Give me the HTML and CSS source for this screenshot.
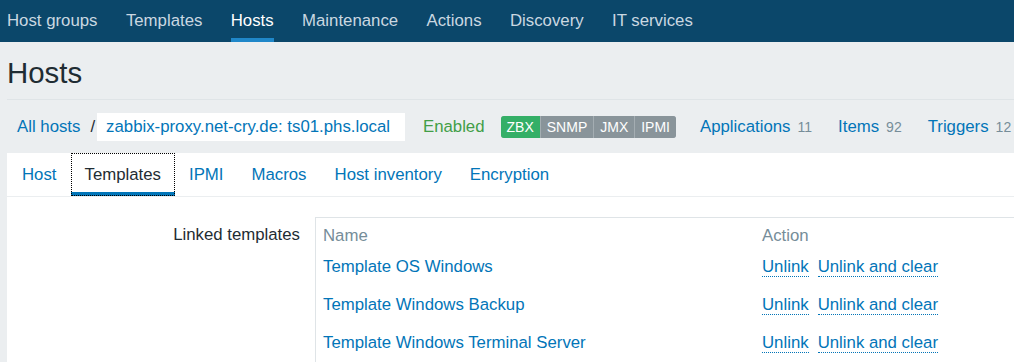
FILE: index.html
```html
<!DOCTYPE html>
<html lang="en">
<head>
    <meta charset="UTF-8">
    <meta name="viewport" content="width=device-width, initial-scale=1.0">
    <title>Hosts</title>
    <link rel="stylesheet" href="styles.css">
</head>
<body>
    <!-- Top menu -->
    <nav class="top-nav">
        <a href="#">Host groups</a>
        <a href="#">Templates</a>
        <a href="#" class="selected">Hosts</a>
        <a href="#">Maintenance</a>
        <a href="#">Actions</a>
        <a href="#">Discovery</a>
        <a href="#">IT services</a>
    </nav>

    <div class="page">
        <div class="page-header">
            <h1>Hosts</h1>
        </div>

        <!-- Host breadcrumbs and status -->
        <div class="host-bar">
            <a href="#" class="crumb">All hosts</a>
            <span class="crumb-sep">/</span>
            <span class="crumb-current">zabbix-proxy.net-cry.de: ts01.phs.local</span>
            <span class="status-enabled">Enabled</span>
            <span class="status-group">
                <span class="status status-green">ZBX</span>
                <span class="status">SNMP</span>
                <span class="status">JMX</span>
                <span class="status">IPMI</span>
            </span>
            <a href="#" class="host-link">Applications<span class="count">11</span></a>
            <a href="#" class="host-link">Items<span class="count">92</span></a>
            <a href="#" class="host-link">Triggers<span class="count">12</span></a>
        </div>

        <div class="tab-panel">
            <ul class="tabs">
                <li><a href="#">Host</a></li>
                <li class="active"><a href="#">Templates</a></li>
                <li><a href="#">IPMI</a></li>
                <li><a href="#">Macros</a></li>
                <li><a href="#">Host inventory</a></li>
                <li><a href="#">Encryption</a></li>
            </ul>

            <div class="form-row">
                <div class="form-label">Linked templates</div>
                <div class="form-field">
                    <div class="tpl-table">
                        <div class="tpl-row tpl-head">
                            <span>Name</span>
                            <span>Action</span>
                        </div>
                        <div class="tpl-row">
                            <a href="#">Template OS Windows</a>
                            <span><a href="#" class="action">Unlink</a><a href="#" class="action">Unlink and clear</a></span>
                        </div>
                        <div class="tpl-row">
                            <a href="#">Template Windows Backup</a>
                            <span><a href="#" class="action">Unlink</a><a href="#" class="action">Unlink and clear</a></span>
                        </div>
                        <div class="tpl-row">
                            <a href="#">Template Windows Terminal Server</a>
                            <span><a href="#" class="action">Unlink</a><a href="#" class="action">Unlink and clear</a></span>
                        </div>
                    </div>
                </div>
            </div>
        </div>
    </div>
</body>
</html>
```

FILE: styles.css
```css
html {
    overflow: hidden;
}

body {
    margin: 0;
    min-width: 1060px;
    font-family: "Liberation Sans", Arial, sans-serif;
    font-size: 16.8px;
    color: #1f2c33;
    background-color: #ebeef0;
}

a {
    color: #0275b8;
    text-decoration: none;
}

/* Top menu */
.top-nav {
    display: flex;
    gap: 28.4px;
    height: 42px;
    padding-left: 7px;
    background-color: #0b476a;
    box-sizing: border-box;
}

.top-nav a {
    padding: 10px 0 7px;
    line-height: 21px;
    color: #cad8e1;
    border-bottom: 4px solid transparent;
}

.top-nav a.selected {
    color: #ffffff;
    border-bottom-color: #1f87c9;
}

.page {
    padding-left: 7px;
}

.page-header {
    padding: 14px 0 9px;
    border-bottom: 1px solid #dfe4e7;
}

.page-header h1 {
    margin: 0;
    font-size: 29.4px;
    line-height: 34px;
    font-weight: normal;
}

/* Host bar */
.host-bar {
    display: flex;
    align-items: center;
    height: 28px;
    margin-top: 13px;
    padding-left: 10px;
    white-space: nowrap;
}

.crumb-sep {
    margin: 0 2px 0 10px;
}

.crumb-current {
    padding: 0 15px 0 9px;
    line-height: 28px;
    color: #0275b8;
    background-color: #ffffff;
}

.status-enabled {
    margin-left: 18px;
    color: #429e47;
}

.status-group {
    display: flex;
    gap: 1px;
    margin-left: 16px;
    background-color: #a4adb2;
    border-radius: 3px;
    overflow: hidden;
}

.status {
    padding: 0 6px;
    height: 22px;
    line-height: 22px;
    font-size: 14px;
    color: #ffffff;
    background-color: #89949a;
}

.status-green {
    background-color: #34af67;
}

.host-link {
    margin-left: 24px;
}

.host-link + .host-link {
    margin-left: 26px;
}

.count {
    margin-left: 7px;
    font-size: 14px;
    color: #768d99;
}

/* Tabs */
.tab-panel {
    margin-top: 12px;
    background-color: #ffffff;
    padding-bottom: 20px;
}

.tabs {
    display: flex;
    margin: 0;
    padding: 0;
    list-style: none;
    border-bottom: 1px solid #ebeef0;
}

.tabs li {
    padding: 12px 14px 7px;
    line-height: 20px;
    border-bottom: 4px solid transparent;
}

.tabs li:first-child {
    padding-left: 15px;
}

.tabs li.active {
    border-bottom-color: #0275b8;
    outline: 1px dotted #000000;
    outline-offset: -1px;
}

.tabs li.active a {
    color: #1f2c33;
}

/* Form */
.form-row {
    display: grid;
    grid-template-columns: 293px 1fr;
    gap: 15px;
    margin-top: 20px;
}

.form-label {
    padding-top: 8px;
    line-height: 20px;
    text-align: right;
}

.tpl-table {
    padding: 0 7px;
    border-top: 1px solid #dfe4e7;
    border-left: 1px solid #dfe4e7;
}

.tpl-row {
    display: grid;
    grid-template-columns: 439px auto;
    padding: 8px 0 10px;
    line-height: 20px;
}

.tpl-head {
    padding-bottom: 3px;
    color: #768d99;
}

.action {
    margin-right: 9px;
    border-bottom: 1px dotted #0275b8;
}
```
